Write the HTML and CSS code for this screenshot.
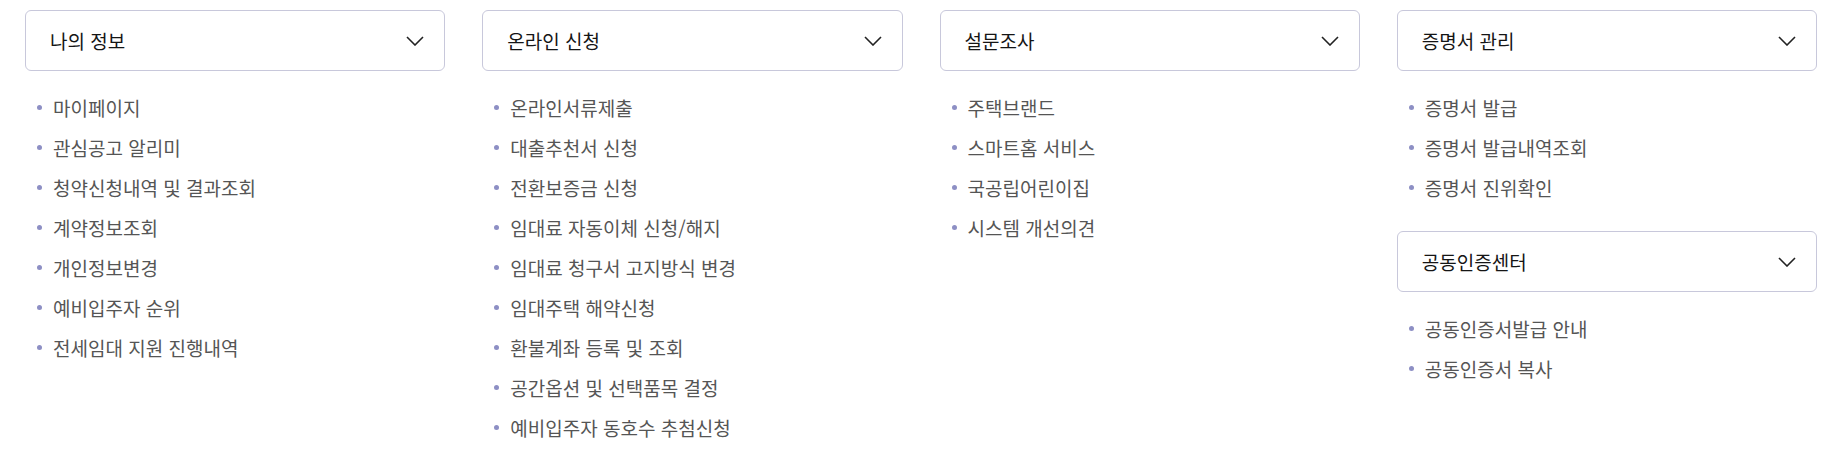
FILE: index.html
```html
<!DOCTYPE html>
<html lang="ko">
<head>
<meta charset="utf-8">
<title>메뉴</title>
<link rel="stylesheet" href="styles.css">
</head>
<body>
<div class="menu">
  <div class="col">
    <div class="head"><span>나의 정보</span><svg class="chev" viewBox="0 0 18 10"><path d="M1 1l8 8 8-8"/></svg></div>
    <ul class="list">
      <li>마이페이지</li>
      <li>관심공고 알리미</li>
      <li>청약신청내역 및 결과조회</li>
      <li>계약정보조회</li>
      <li>개인정보변경</li>
      <li>예비입주자 순위</li>
      <li>전세임대 지원 진행내역</li>
    </ul>
  </div>
  <div class="col">
    <div class="head"><span>온라인 신청</span><svg class="chev" viewBox="0 0 18 10"><path d="M1 1l8 8 8-8"/></svg></div>
    <ul class="list">
      <li>온라인서류제출</li>
      <li>대출추천서 신청</li>
      <li>전환보증금 신청</li>
      <li>임대료 자동이체 신청/해지</li>
      <li>임대료 청구서 고지방식 변경</li>
      <li>임대주택 해약신청</li>
      <li>환불계좌 등록 및 조회</li>
      <li>공간옵션 및 선택품목 결정</li>
      <li>예비입주자 동호수 추첨신청</li>
    </ul>
  </div>
  <div class="col">
    <div class="head"><span>설문조사</span><svg class="chev" viewBox="0 0 18 10"><path d="M1 1l8 8 8-8"/></svg></div>
    <ul class="list">
      <li>주택브랜드</li>
      <li>스마트홈 서비스</li>
      <li>국공립어린이집</li>
      <li>시스템 개선의견</li>
    </ul>
  </div>
  <div class="col">
    <div class="head"><span>증명서 관리</span><svg class="chev" viewBox="0 0 18 10"><path d="M1 1l8 8 8-8"/></svg></div>
    <ul class="list">
      <li>증명서 발급</li>
      <li>증명서 발급내역조회</li>
      <li>증명서 진위확인</li>
    </ul>
    <div class="head"><span>공동인증센터</span><svg class="chev" viewBox="0 0 18 10"><path d="M1 1l8 8 8-8"/></svg></div>
    <ul class="list">
      <li>공동인증서발급 안내</li>
      <li>공동인증서 복사</li>
    </ul>
  </div>
</div>
</body>
</html>
```
FILE: styles.css
```css
html, body {
  margin: 0;
  padding: 0;
  background: #fff;
}
body {
  font-family: "Noto Sans CJK KR", "Noto Sans", sans-serif;
}
.menu {
  display: grid;
  grid-template-columns: repeat(4, 1fr);
  column-gap: 37px;
  padding: 10px 28px 0 25px;
}
.col {
  display: flex;
  flex-direction: column;
}
.head {
  box-sizing: border-box;
  height: 61px;
  border: 1px solid #c8c8db;
  border-radius: 6px;
  display: flex;
  align-items: center;
  justify-content: space-between;
  padding: 0 20px 0 24px;
  font-size: 19px;
  font-weight: 400;
  color: #151515;
}
.chev {
  width: 18px;
  height: 10px;
  fill: none;
  stroke: #222;
  stroke-width: 1.6;
}
.list {
  list-style: none;
  margin: 16px 0 24px;
  padding: 0 0 0 12px;
}
.list li {
  display: flex;
  align-items: center;
  height: 40px;
  font-size: 19px;
  color: #555;
}
.list li::before {
  content: "";
  width: 5px;
  height: 5px;
  border-radius: 50%;
  background: #8d8fc4;
  margin-right: 11px;
  flex: none;
}
```
